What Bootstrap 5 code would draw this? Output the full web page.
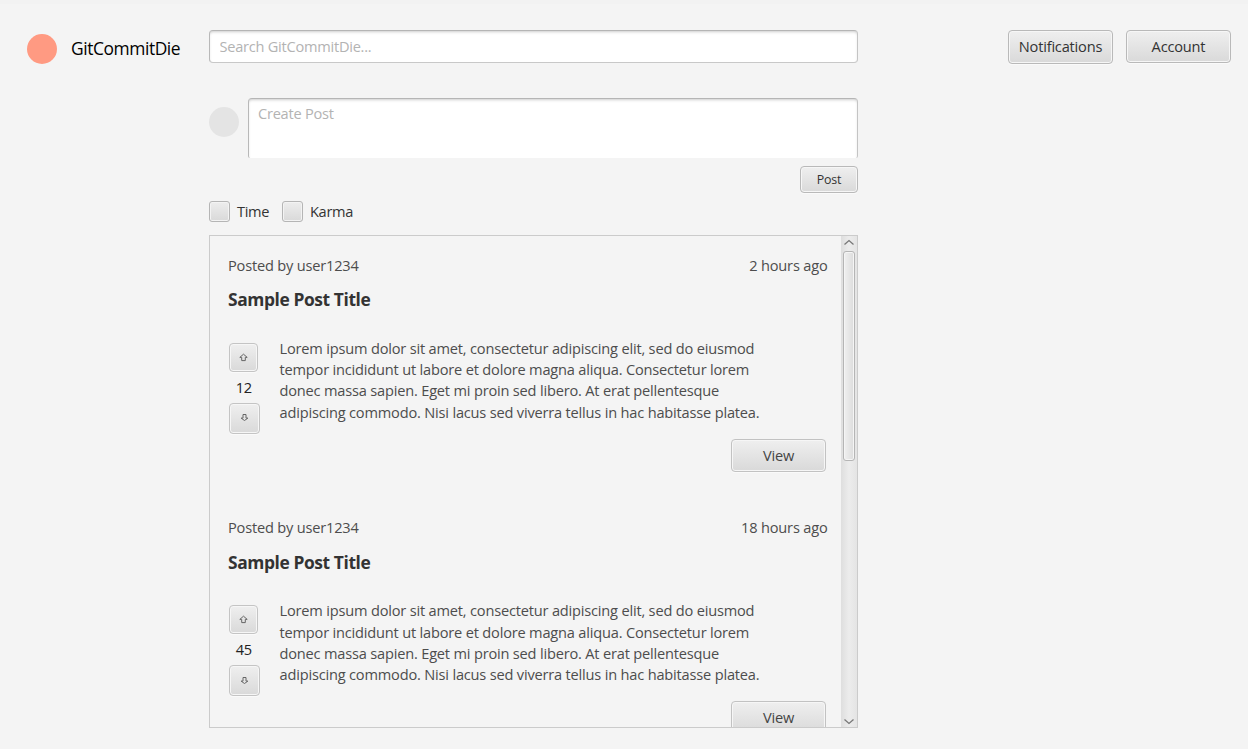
<!DOCTYPE html>
<html lang="en">
<head>
<meta charset="utf-8">
<title>GitCommitDie</title>
<meta name="viewport" content="width=device-width, initial-scale=1">
<link href="https://cdn.jsdelivr.net/npm/bootstrap@5.3.0/dist/css/bootstrap.min.css" rel="stylesheet">
<style>
body{background:#f4f4f4;color:#333;font-family:"Open Sans","Noto Sans",sans-serif;font-size:14.6px;line-height:20px;height:749px;overflow:hidden;letter-spacing:-.19px;border-top:4px solid #f2f2f2}
.topbar{height:94px;padding:26px 17px 0 27px}
.logo-dot{width:30px;height:30px;background:#ff9a82;margin-top:4px}
.brand-name{width:138px;padding-left:14px;font-size:17.4px;line-height:24px;margin:6px 17px 0 0;color:#000;letter-spacing:-.42px;white-space:nowrap}
.form-control{border:1px solid #bbb;border-color:#b5b5b5 #c4c4c4 #c8c8c8 #b8b8b8;border-radius:4px;padding:5px 9px 6px 9.5px;font-size:14.6px;line-height:20px;color:#333;box-shadow:inset 0 2px 3px -1px #ccc;letter-spacing:-.25px}
.form-control::placeholder{color:#b3b3b3;opacity:1}
.search-box{width:649px;height:33px;margin-left:-3px}
.fx-btn{border:1px solid #b9b9b9;border-radius:4px;background:linear-gradient(#efefef,#d9d9d9);box-shadow:inset 0 0 0 1px #f6f6f6,0 1px 0 #fafafa;color:#333;padding:0;font-size:14.6px;line-height:20px;letter-spacing:-.19px}
.fx-btn:hover{color:#222;border-color:#999}
.head-actions{gap:13px}
.head-btn{width:105px;height:33px;padding-bottom:2px}
.head-btn.tall{height:34px;padding-bottom:3px}
.column{width:649px;margin-left:209px}
.avatar{width:30px;height:30px;background:#e4e4e4;margin-top:8.5px}
.compose{width:610px;height:60px;resize:none;border-bottom:0;border-radius:4px 4px 2px 2px;margin-left:9px;padding:4px 9px}
.post-btn{width:58px;height:27px;font-size:12.4px;line-height:18px;margin-top:8px}
.filters{height:21px;margin-top:8px}
.form-check-input.fx-check{width:21px;height:21px;margin:0;border:1px solid #b5b5b5;border-radius:3px;background-color:#e2e2e2;background-image:linear-gradient(#ededed,#d9d9d9);box-shadow:inset 0 0 0 1px #f3f3f3}
.fx-label{margin:0 13px 2px 7px;letter-spacing:-.35px}
.feed{height:493px;margin-top:13px;border:1px solid #cbcbcb}
.post{height:262.4px;padding:19px 13.5px 0 18px;color:#4d4d4d}
.post-title{font-size:17.4px;line-height:24px;font-weight:700;margin:12.4px 0 0;color:#333;letter-spacing:-.4px}
.post-row{margin-top:31.3px}
.votes{width:31px;padding-left:.6px}
.vote-up{width:29px;height:29px}
.vote-dn{width:31px;height:31px}
.vote-up,.vote-dn{border-color:#c4c4c4}
.vote-up svg,.vote-dn svg{display:block;margin:auto}
.vote-dn svg{margin-bottom:10px;margin-top:9px}
.score{height:31px;line-height:31px;color:#222}
.copy{margin:-4.8px 0 0 20.5px;line-height:21.25px;white-space:nowrap}
.view-btn{width:95px;height:33px;color:#444;margin:0 1.5px 0 0;border-color:#c2c2c2;padding-bottom:1px}
.view-row{margin-top:4.9px}
.post-row{height:91px}
.track{width:16px;background:linear-gradient(90deg,#dedede,#ececec 50%,#e4e4e4);padding:1px 0 0 2px}
.track svg{display:block}
.thumb{width:12px;height:210px;border:1px solid #b5b5b5;border-radius:3px;background:linear-gradient(90deg,#f0f0f0,#dcdcdc);box-shadow:inset 0 0 0 1px #f5f5f5}
</style>
</head>
<body>
<header class="topbar d-flex align-items-start">
  <div class="logo-dot rounded-circle"></div>
  <div class="brand-name">GitCommitDie</div>
  <input class="form-control search-box" placeholder="Search GitCommitDie...">
  <div class="d-flex ms-auto head-actions">
    <button class="btn fx-btn head-btn tall">Notifications</button>
    <button class="btn fx-btn head-btn">Account</button>
  </div>
</header>
<main class="column">
  <div class="d-flex">
    <div class="avatar rounded-circle"></div>
    <textarea class="form-control compose" placeholder="Create Post"></textarea>
  </div>
  <div class="d-flex justify-content-end"><button class="btn fx-btn post-btn">Post</button></div>
  <div class="filters d-flex align-items-center">
    <input class="form-check-input fx-check" type="checkbox" id="t"><label class="fx-label" for="t">Time</label>
    <input class="form-check-input fx-check" type="checkbox" id="k"><label class="fx-label" for="k">Karma</label>
  </div>
  <section class="feed d-flex overflow-hidden">
    <div class="flex-grow-1">
      <article class="post">
        <div class="d-flex justify-content-between"><span>Posted by user1234</span><span>2 hours ago</span></div>
        <h2 class="post-title">Sample Post Title</h2>
        <div class="post-row d-flex">
          <div class="votes">
            <button class="btn fx-btn vote-up d-block" aria-label="Up"><svg width="9" height="9" viewBox="0 0 9 9" fill="none" stroke="#666"><path d="M.8 4.4 4.5 1.2l3.7 3.2H6.3v3.2H2.7V4.4z"/></svg></button>
            <div class="score text-center">12</div>
            <button class="btn fx-btn vote-dn d-block" aria-label="Down"><svg width="9" height="9" viewBox="0 0 9 9" fill="none" stroke="#666"><path d="M3 1.5h3v3.6h1.9L4.5 7.5 1.1 5.1H3z"/></svg></button>
          </div>
          <p class="copy">Lorem ipsum dolor sit amet, consectetur adipiscing elit, sed do eiusmod<br>tempor incididunt ut labore et dolore magna aliqua. Consectetur lorem<br>donec massa sapien. Eget mi proin sed libero. At erat pellentesque<br>adipiscing commodo. Nisi lacus sed viverra tellus in hac habitasse platea.</p>
        </div>
        <div class="view-row d-flex justify-content-end"><button class="btn fx-btn view-btn">View</button></div>
      </article>
      <article class="post">
        <div class="d-flex justify-content-between"><span>Posted by user1234</span><span>18 hours ago</span></div>
        <h2 class="post-title">Sample Post Title</h2>
        <div class="post-row d-flex">
          <div class="votes">
            <button class="btn fx-btn vote-up d-block" aria-label="Up"><svg width="9" height="9" viewBox="0 0 9 9" fill="none" stroke="#666"><path d="M.8 4.4 4.5 1.2l3.7 3.2H6.3v3.2H2.7V4.4z"/></svg></button>
            <div class="score text-center">45</div>
            <button class="btn fx-btn vote-dn d-block" aria-label="Down"><svg width="9" height="9" viewBox="0 0 9 9" fill="none" stroke="#666"><path d="M3 1.5h3v3.6h1.9L4.5 7.5 1.1 5.1H3z"/></svg></button>
          </div>
          <p class="copy">Lorem ipsum dolor sit amet, consectetur adipiscing elit, sed do eiusmod<br>tempor incididunt ut labore et dolore magna aliqua. Consectetur lorem<br>donec massa sapien. Eget mi proin sed libero. At erat pellentesque<br>adipiscing commodo. Nisi lacus sed viverra tellus in hac habitasse platea.</p>
        </div>
        <div class="view-row d-flex justify-content-end"><button class="btn fx-btn view-btn">View</button></div>
      </article>
    </div>
    <div class="track d-flex flex-column flex-shrink-0">
      <svg width="12" height="14" viewBox="0 0 12 14" fill="none" stroke="#777" stroke-width="1.3"><path d="m1.5 7.5 4.5-4 4.5 4"/></svg>
      <div class="thumb"></div>
      <svg class="mt-auto" width="12" height="14" viewBox="0 0 12 14" fill="none" stroke="#777" stroke-width="1.3"><path d="m1.5 6.5 4.5 4 4.5-4"/></svg>
    </div>
  </section>
</main>
<script src="https://cdn.jsdelivr.net/npm/bootstrap@5.3.0/dist/js/bootstrap.bundle.min.js"></script>
</body>
</html>
